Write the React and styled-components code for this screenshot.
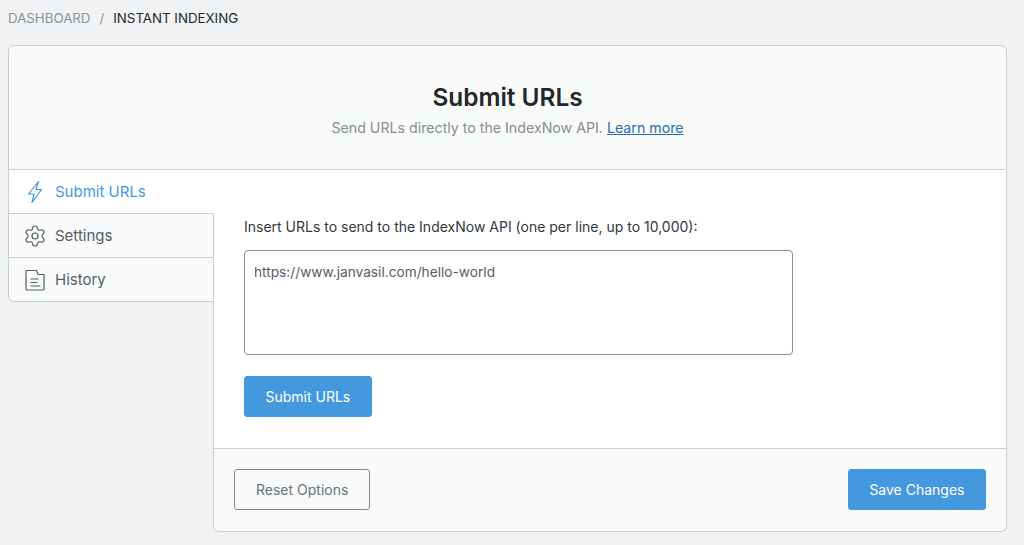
import styled, { createGlobalStyle } from "styled-components";
import { Settings } from "lucide-react";

const GlobalStyle = createGlobalStyle`
  html, body {
    margin: 0;
    height: 100%;
    background: #f0f2f4;
    overflow: hidden;
  }
  body, button, textarea {
    font-family: "Inter", "Liberation Sans", sans-serif;
  }
  * { box-sizing: border-box; }
`;

const Page = styled.div`
  width: 1024px;
  height: 545px;
  padding: 0 17px 0 8px;
`;

const Breadcrumbs = styled.nav`
  height: 45px;
  padding-top: 10px;
  display: flex;
  gap: 9px;
  font-size: 13.3px;
  line-height: 16px;
  color: #8a9199;
  strong {
    font-weight: 400;
    color: #23282d;
  }
`;

const Header = styled.header`
  height: 125px;
  background: #f9fafa;
  border: 1px solid #c7ced6;
  border-radius: 6px 6px 0 0;
  text-align: center;
  padding-top: 36px;
`;

const Title = styled.h1`
  margin: 0;
  font-size: 24.4px;
  line-height: 30px;
  font-weight: 600;
  color: #23282d;
`;

const Subtitle = styled.p`
  margin: 6px 0 0;
  font-size: 14.2px;
  line-height: 20px;
  color: #868d95;
  a {
    color: #2271b1;
    text-decoration: underline;
  }
`;

const Body = styled.div`
  display: flex;
  align-items: flex-start;
`;

const Tabs = styled.aside`
  width: 206px;
  flex: none;
  position: relative;
  z-index: 1;
`;

const Tab = styled.div`
  height: 44px;
  display: flex;
  align-items: center;
  gap: 8px;
  padding-left: 14px;
  font-size: 15px;
  color: ${(p) => (p.$active ? "#4299e1" : "#555d66")};
  background: ${(p) => (p.$active ? "#fff" : "#f9fafa")};
  border-left: 1px solid #c7ced6;
  border-bottom: 1px solid #c7ced6;
  border-right: ${(p) => (p.$active ? "1px solid #fff" : "1px solid #c7ced6")};
  border-radius: ${(p) => (p.$last ? "0 0 0 6px" : "0")};
  svg {
    width: 24px;
    height: 24px;
    flex: none;
  }
`;

const Panel = styled.main`
  flex: 1;
  height: 362px;
  display: flex;
  flex-direction: column;
  background: #fff;
  border: 1px solid #c7ced6;
  border-top: 0;
  border-radius: 0 0 6px 6px;
  margin-left: -1px;
`;

const Content = styled.section`
  height: 279px;
  padding: 48px 30px 0;
  border-bottom: 1px solid #c7ced6;
`;

const FieldLabel = styled.label`
  display: block;
  font-size: 14px;
  line-height: 18px;
  color: #32373c;
`;

const UrlInput = styled.textarea`
  display: block;
  width: 549px;
  height: 105px;
  margin-top: 14px;
  padding: 12px 9px;
  font-size: 13.7px;
  line-height: 18px;
  color: #555d66;
  background: #fff;
  border: 1px solid #8c8f94;
  border-radius: 4px;
  resize: none;
  outline: none;
`;

const PrimaryButton = styled.button`
  height: 41px;
  padding: 0 20.5px;
  font-size: 14px;
  color: #fff;
  background: #4499de;
  border: 1px solid #4499de;
  border-radius: 3px;
`;

const SubmitRow = styled.div`
  margin-top: 21px;
`;

const Footer = styled.footer`
  flex: 1;
  display: flex;
  justify-content: space-between;
  align-items: flex-start;
  padding: 20px 20px 0;
  background: #fafafa;
  border-radius: 0 0 6px 6px;
`;

const SecondaryButton = styled.button`
  height: 41px;
  padding: 0 21px;
  font-size: 14px;
  color: #6b7280;
  background: #f9fafa;
  border: 1px solid #7e8993;
  border-radius: 3px;
`;

function BoltIcon() {
  return (
    <svg viewBox="0 0 24 24" fill="none" stroke="currentColor" strokeWidth="1.2" strokeLinejoin="round">
      <path d="M15.5 1.5 5.5 14h5.5L9 22.5 18.5 9.5h-5.6L15.5 1.5Z" />
    </svg>
  );
}

function HistoryIcon() {
  return (
    <svg viewBox="0 0 24 24" fill="none" stroke="currentColor" strokeWidth="1.2" strokeLinecap="round" strokeLinejoin="round">
      <path d="M3 2.5h10.5l1.5 4h6v14.5a1 1 0 0 1-1 1H4a1 1 0 0 1-1-1V2.5Z" />
      <path d="M8 11h7M8 14.5h6M8 18h9" />
    </svg>
  );
}

export default function App() {
  return (
    <>
      <GlobalStyle />
      <Page>
        <Breadcrumbs>
          <span>DASHBOARD</span>
          <span>/</span>
          <strong>INSTANT INDEXING</strong>
        </Breadcrumbs>
        <Header>
          <Title>Submit URLs</Title>
          <Subtitle>
            Send URLs directly to the IndexNow API. <a href="#learn">Learn more</a>
          </Subtitle>
        </Header>
        <Body>
          <Tabs>
            <Tab $active>
              <BoltIcon />
              Submit URLs
            </Tab>
            <Tab>
              <Settings strokeWidth={1.2} />
              Settings
            </Tab>
            <Tab $last>
              <HistoryIcon />
              History
            </Tab>
          </Tabs>
          <Panel>
            <Content>
              <FieldLabel htmlFor="urls">
                Insert URLs to send to the IndexNow API (one per line, up to 10,000):
              </FieldLabel>
              <UrlInput id="urls" defaultValue="https://www.janvasil.com/hello-world" />
              <SubmitRow>
                <PrimaryButton>Submit URLs</PrimaryButton>
              </SubmitRow>
            </Content>
            <Footer>
              <SecondaryButton>Reset Options</SecondaryButton>
              <PrimaryButton>Save Changes</PrimaryButton>
            </Footer>
          </Panel>
        </Body>
      </Page>
    </>
  );
}
